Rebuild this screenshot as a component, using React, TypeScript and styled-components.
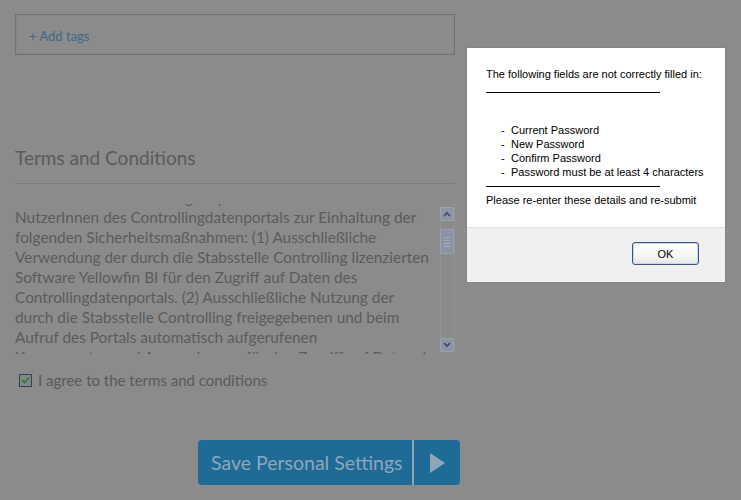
import { useEffect, useRef } from "react";
import styled, { createGlobalStyle } from "styled-components";

const GlobalStyle = createGlobalStyle`
  html, body {
    margin: 0;
    padding: 0;
    background: #8b8b8b;
  }
  body {
    font-family: Lato, "Open Sans", sans-serif;
  }
`

const Page = styled.div`
  width: 440px;
  padding: 14px 0 0 15px;
`

const TagBox = styled.div`
  display: flex;
  align-items: center;
  height: 39px;
  padding-left: 13px;
  border: 1px solid #727272;
  box-shadow: inset 0 0 0 1px #868686;
`

const AddTags = styled.span`
  font-size: 13px;
  color: #3f6887;
  margin-top: 2px;
`

const SectionTitle = styled.h2`
  margin: 91px 0 0;
  padding-bottom: 13px;
  border-bottom: 1px solid #7b7b7b;
  font-size: 19px;
  line-height: 24px;
  font-weight: 400;
  color: #5b5b5b;
`

const TermsBox = styled.div`
  display: flex;
  margin-top: 20px;
  height: 150px;
`

const TermsText = styled.div`
  flex: 1;
  overflow: hidden;
  font-size: 15.4px;
  line-height: 20px;
  color: #5c5c5c;
  white-space: nowrap;
`

const ScrollBar = styled.div`
  display: flex;
  flex-direction: column;
  width: 15px;
  margin-left: 7px;
  padding-top: 3px;
  box-shadow: inset 1px 0 0 #939393, inset -1px 0 0 #939393;
`

const ScrollBtn = styled.div<{ grow?: boolean }>`
  display: flex;
  align-items: center;
  justify-content: center;
  width: 14px;
  height: 14px;
  border-radius: 2px;
  background: #8e94a3;
  box-shadow: inset 0 0 0 1px #9aa1b0;
  margin-top: ${(p) => (p.grow ? "auto" : "0")};
  margin-bottom: ${(p) => (p.grow ? "2px" : "0")};
`

const Thumb = styled.div`
  display: flex;
  flex-direction: column;
  align-items: center;
  justify-content: center;
  gap: 2px;
  width: 14px;
  height: 25px;
  margin-top: 8px;
  border-radius: 2px;
  background: #8d93a3;
  box-shadow: inset 0 0 0 1px #9ba2b2;
`

const Grip = styled.span`
  width: 6px;
  height: 1px;
  background: #a2a9b8;
`

const AgreeRow = styled.label`
  display: flex;
  align-items: center;
  gap: 6px;
  margin-top: 16px;
  padding-left: 4px;
  height: 20px;
  font-size: 15px;
  color: #5a5a5a;
`

const Check = styled.span`
  display: flex;
  align-items: center;
  justify-content: center;
  width: 11px;
  height: 11px;
  border: 1px solid #33424f;
  background: #808886;
`

const Actions = styled.div`
  display: flex;
  margin: 50px -10px 0 0;
  padding-left: 183px;
`

const SaveButton = styled.button`
  display: flex;
  align-items: stretch;
  height: 45px;
  padding: 0;
  border: none;
  border-radius: 4px;
  background: #1f6b98;
  overflow: hidden;
  cursor: pointer;
`

const SaveLabel = styled.span`
  display: flex;
  align-items: center;
  width: 201px;
  padding-left: 13px;
  font-family: Lato, sans-serif;
  font-size: 19.5px;
  color: #8ca7b9;
  border-right: 2px solid #8ea4b3;
`

const SaveArrow = styled.span`
  display: flex;
  align-items: center;
  justify-content: center;
  width: 46px;
`

const Dialog = styled.div`
  position: fixed;
  left: 466px;
  top: 47px;
  width: 258px;
  border: 1px solid #858585;
  background: #fff;
  font-family: "Liberation Sans", Arial, sans-serif;
  font-size: 11px;
  color: #000;
`

const DialogBody = styled.div`
  padding: 19px 10px 20px 19px;
  line-height: 14px;
`

const Rule = styled.div<{ top: number }>`
  width: 174px;
  height: 1px;
  margin-top: ${(p) => p.top}px;
  background: #000;
`

const Missing = styled.ul`
  list-style: none;
  margin: 30px 0 7px;
  padding: 0 0 0 15px;
`

const Item = styled.li`
  &::before {
    content: "-";
    display: inline-block;
    width: 10px;
  }
`

const Resubmit = styled.div`
  margin-top: 6px;
`

const DialogFooter = styled.div`
  display: flex;
  justify-content: flex-end;
  height: 55px;
  padding: 14px 26px 0 0;
  box-sizing: border-box;
  background: #f0f0f0;
  border-top: 1px solid #e2e2e2;
`

const OkButton = styled.button`
  width: 67px;
  height: 23px;
  border: 1px solid #3a5583;
  border-radius: 3px;
  background: linear-gradient(#ffffff, #f3f3ef 70%, #e6e4dc);
  box-shadow: inset 0 0 0 1px #c6d8f0;
  font-family: "Liberation Sans", Arial, sans-serif;
  font-size: 11px;
  color: #000;
`

const terms = [
  "Die Stabsstelle Controlling verpflichtet alle",
  "NutzerInnen des Controllingdatenportals zur Einhaltung der",
  "folgenden Sicherheitsmaßnahmen: (1) Ausschließliche",
  "Verwendung der durch die Stabsstelle Controlling lizenzierten",
  "Software Yellowfin BI für den Zugriff auf Daten des",
  "Controllingdatenportals. (2) Ausschließliche Nutzung der",
  "durch die Stabsstelle Controlling freigegebenen und beim",
  "Aufruf des Portals automatisch aufgerufenen",
  "Komponenten und Anwendungen für den Zugriff auf Daten des",
  "Controllingdatenportals. (3) Keine Weitergabe der",
  "Zugangsdaten an Dritte.",
]

const missing = [
  "Current Password",
  "New Password",
  "Confirm Password",
  "Password must be at least 4 characters",
]

const App = () => {
  const termsRef = useRef<HTMLDivElement>(null)

  useEffect(() => {
    if (termsRef.current) termsRef.current.scrollTop = 17
  }, [])

  return <>
    <GlobalStyle />
    <Page>
      <TagBox>
        <AddTags>+ Add tags</AddTags>
      </TagBox>

      <SectionTitle>Terms and Conditions</SectionTitle>
      <TermsBox>
        <TermsText ref={termsRef}>
          {terms.map((line, i) => <div key={i}>{line}</div>)}
        </TermsText>
        <ScrollBar>
          <ScrollBtn>
            <svg width="8" height="6" viewBox="0 0 8 6">
              <path d="M1 5 L4 2 L7 5" fill="none" stroke="#3c4a68" strokeWidth="1.6" />
            </svg>
          </ScrollBtn>
          <Thumb>
            <Grip /><Grip /><Grip /><Grip />
          </Thumb>
          <ScrollBtn grow>
            <svg width="8" height="6" viewBox="0 0 8 6">
              <path d="M1 1 L4 4 L7 1" fill="none" stroke="#3c4a68" strokeWidth="1.6" />
            </svg>
          </ScrollBtn>
        </ScrollBar>
      </TermsBox>

      <AgreeRow>
        <Check>
          <svg width="9" height="8" viewBox="0 0 9 8">
            <path d="M1 4 L3.5 6.5 L8 1.5" fill="none" stroke="#2f7a37" strokeWidth="1.8" />
          </svg>
        </Check>
        I agree to the terms and conditions
      </AgreeRow>

      <Actions>
        <SaveButton>
          <SaveLabel>Save Personal Settings</SaveLabel>
          <SaveArrow>
            <svg width="15" height="20" viewBox="0 0 15 20">
              <path d="M0 0 L15 10 L0 20 Z" fill="#8ea6b8" />
            </svg>
          </SaveArrow>
        </SaveButton>
      </Actions>
    </Page>

    <Dialog>
      <DialogBody>
        <div>The following fields are not correctly filled in:</div>
        <Rule top={11} />
        <Missing>
          {missing.map((m) => <Item key={m}>{m}</Item>)}
        </Missing>
        <Rule top={0} />
        <Resubmit>Please re-enter these details and re-submit</Resubmit>
      </DialogBody>
      <DialogFooter>
        <OkButton>OK</OkButton>
      </DialogFooter>
    </Dialog>
  </>
}

export default App
